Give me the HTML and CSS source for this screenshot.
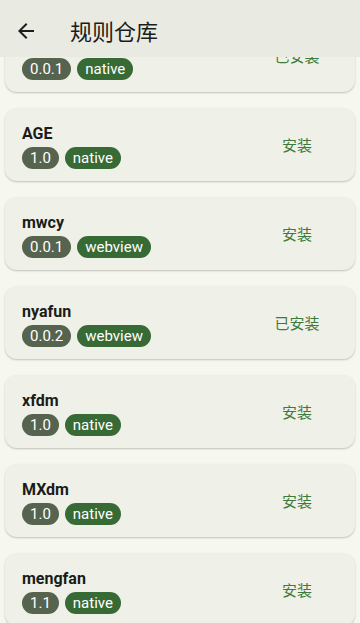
FILE: index.html
```
<!DOCTYPE html>
<html lang="zh">
<head>
    <meta charset="UTF-8">
    <meta name="viewport" content="width=device-width, initial-scale=1.0">
    <title>规则仓库</title>
    <link rel="stylesheet" href="styles.css">
</head>
<body>

<div class="appbar">
    <svg class="back" width="24" height="24" viewBox="0 0 24 24">
        <path d="M20 11H7.83l5.59-5.59L12 4l-8 8 8 8 1.41-1.41L7.83 13H20v-2z" fill="#1c1c1a"/>
    </svg>
    <span class="title">规则仓库</span>
</div>

<div class="list" id="list">
    <div class="card">
        <div class="info">
            <div class="name">Bangumi</div>
            <div class="chips"><span class="chip version">0.0.1</span><span class="chip type">native</span></div>
        </div>
        <span class="action">已安装</span>
    </div>
    <div class="card">
        <div class="info">
            <div class="name">AGE</div>
            <div class="chips"><span class="chip version">1.0</span><span class="chip type">native</span></div>
        </div>
        <span class="action">安装</span>
    </div>
    <div class="card">
        <div class="info">
            <div class="name">mwcy</div>
            <div class="chips"><span class="chip version">0.0.1</span><span class="chip type">webview</span></div>
        </div>
        <span class="action">安装</span>
    </div>
    <div class="card">
        <div class="info">
            <div class="name">nyafun</div>
            <div class="chips"><span class="chip version">0.0.2</span><span class="chip type">webview</span></div>
        </div>
        <span class="action">已安装</span>
    </div>
    <div class="card">
        <div class="info">
            <div class="name">xfdm</div>
            <div class="chips"><span class="chip version">1.0</span><span class="chip type">native</span></div>
        </div>
        <span class="action">安装</span>
    </div>
    <div class="card">
        <div class="info">
            <div class="name">MXdm</div>
            <div class="chips"><span class="chip version">1.0</span><span class="chip type">native</span></div>
        </div>
        <span class="action">安装</span>
    </div>
    <div class="card">
        <div class="info">
            <div class="name">mengfan</div>
            <div class="chips"><span class="chip version">1.1</span><span class="chip type">native</span></div>
        </div>
        <span class="action">安装</span>
    </div>
    <div class="card">
        <div class="info">
            <div class="name">yhdm</div>
            <div class="chips"><span class="chip version">1.0</span><span class="chip type">native</span></div>
        </div>
        <span class="action">安装</span>
    </div>
</div>

<script>
    // list is shown scrolled a little
    document.getElementById('list').scrollTop = 38;
</script>

</body>
</html>
```
FILE: styles.css
```
body {
    margin: 0;
    background-color: #f6f8ef;
    font-family: Roboto, "Noto Sans CJK SC", sans-serif;
    height: 623px;
    overflow: hidden;
    display: flex;
    flex-direction: column;
}
.appbar {
    flex: none;
    height: 57px;
    background-color: #e9ebe3;
    display: flex;
    align-items: center;
}
.back {
    margin-left: 14px;
    margin-top: 4px;
}
.title {
    margin-left: 32px;
    font-size: 22px;
    color: #1c1c1a;
    margin-top: 3px;
}
.list {
    flex: 1;
    overflow-y: auto;
    scrollbar-width: none;
    padding-top: 0;
    display: flex;
    flex-direction: column;
    gap: 16px;
}
.card {
    flex: none;
    margin: 0 5px;
    height: 73px;
    box-sizing: border-box;
    background-color: #eff1e8;
    border-radius: 12px;
    box-shadow: 0 1px 2px rgba(0, 0, 0, 0.22);
    display: flex;
    align-items: center;
    padding: 0 26px 0 17px;
}
.card:last-child {
    margin-bottom: 16px;
}
.info {
    flex: 1;
    display: flex;
    flex-direction: column;
    gap: 3px;
    margin-top: 3px;
}
.name {
    font-size: 16px;
    font-weight: bold;
    color: #1a1c18;
    line-height: 20px;
}
.chips {
    display: flex;
    gap: 6px;
}
.chip {
    height: 22px;
    line-height: 22px;
    padding: 0 8px;
    border-radius: 11px;
    color: #fff;
    font-size: 15px;
}
.version {
    background-color: #55634f;
}
.type {
    background-color: #386a35;
}
.action {
    width: 64px;
    text-align: center;
    font-size: 15px;
    color: #3f7a3d;
}
```
